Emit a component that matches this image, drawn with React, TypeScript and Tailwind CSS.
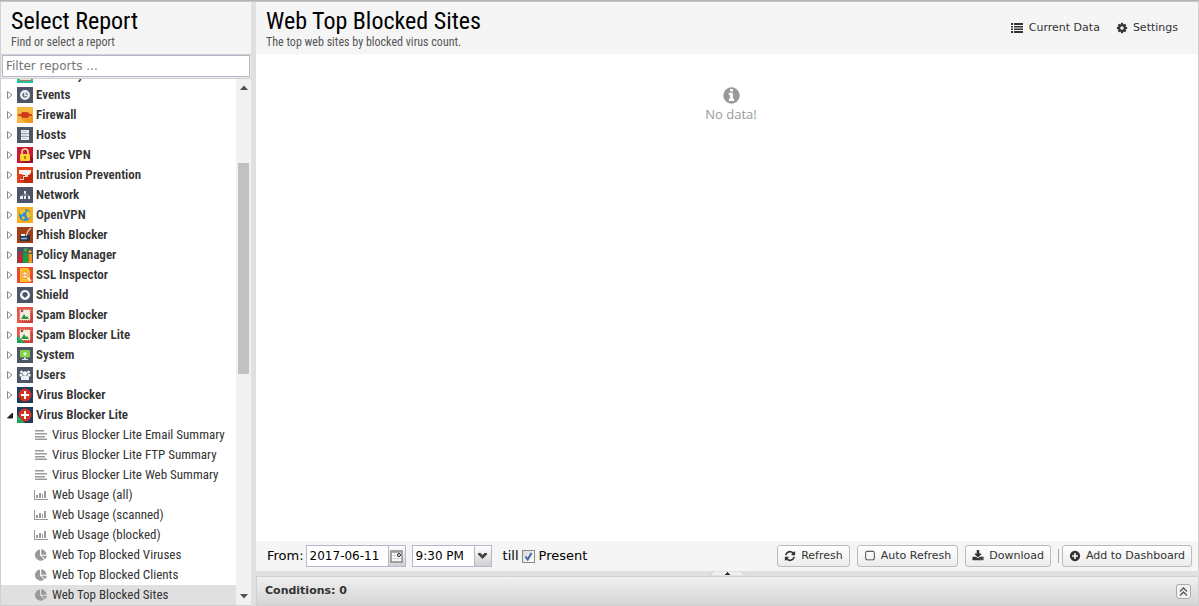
import React from 'react';

const CIRCLE =
  'm640 416q0 209-103 385.5t-279.5 279.5-385.5 103-385.5-103-279.5-279.5-103-385.5 103-385.5 279.5-279.5 385.5-103 385.5 103 279.5 279.5 103 385.5z';

const GLYPHS = {
  refresh:
    'M1639 1056q0 5-1 7-64 268-268 434.5t-478 166.5q-146 0-282.5-55t-243.5-157l-129 129q-19 19-45 19t-45-19-19-45v-448q0-26 19-45t45-19h448q26 0 45 19t19 45-19 45l-137 137q71 66 161 102t187 36q134 0 250-65t186-179q11-17 53-117 8-23 30-23h192q13 0 22.5 9.5t9.5 22.5zm25-800v448q0 26-19 45t-45 19h-448q-26 0-45-19t-19-45 19-45l138-138q-148-137-349-137-134 0-250 65t-186 179q-11 17-53 117-8 23-30 23h-199q-13 0-22.5-9.5t-9.5-22.5v-7q65-268 270-434.5t480-166.5q146 0 284 55.5t245 156.5l130-129q19-19 45-19t45 19 19 45z',
  cog: 'M1152 896q0-106-75-181t-181-75-181 75-75 181 75 181 181 75 181-75 75-181zm512-109v222q0 12-8 23t-20 13l-185 28q-19 54-39 91 35 50 107 138 10 12 10 25t-9 23q-27 37-99 108t-94 71q-12 0-26-9l-138-108q-44 23-91 38-16 136-29 186-7 28-36 28h-222q-14 0-24.5-8.5t-11.5-21.5l-28-184q-49-16-90-37l-141 107q-10 9-25 9-14 0-25-11-126-114-165-168-7-10-7-23 0-12 8-23 15-21 51-66.5t54-70.5q-27-50-41-99l-183-27q-13-2-21-12.5t-8-23.5v-222q0-12 8-23t19-13l186-28q14-46 39-92-40-57-107-138-10-12-10-24 0-10 9-23 26-36 98.5-107.5t94.5-71.5q13 0 26 10l138 107q44-23 91-38 16-136 29-186 7-28 36-28h222q14 0 24.5 8.5t11.5 21.5l28 184q49 16 90 37l142-107q9-9 24-9 13 0 25 10 129 119 165 170 7 8 7 22 0 12-8 23-15 21-51 66.5t-54 70.5q26 50 41 98l183 28q13 2 21 12.5t8 23.5z',
  download:
    'M1344 1344q0-26-19-45t-45-19-45 19-19 45 19 45 45 19 45-19 19-45zm256 0q0-26-19-45t-45-19-45 19-19 45 19 45 45 19 45-19 19-45zm128-224v320q0 40-28 68t-68 28h-1472q-40 0-68-28t-28-68v-320q0-40 28-68t68-28h465l135 136q58 56 136 56t136-56l136-136h464q40 0 68 28t28 68zm-325-569q17 41-14 70l-448 448q-18 19-45 19t-45-19l-448-448q-31-29-14-70 17-39 59-39h256v-448q0-26 19-45t45-19h256q26 0 45 19t19 45v448h256q42 0 59 39z',
  plus:
    'M1344 960v-128q0-26-19-45t-45-19h-256v-256q0-26-19-45t-45-19h-128q-26 0-45 19t-19 45v256h-256q-26 0-45 19t-19 45v128q0 26 19 45t45 19h256v256q0 26 19 45t45 19h128q26 0 45-19t19-45v-256h256q26 0 45-19t19-45zm320-64q0 209-103 385.5t-279.5 279.5-385.5 103-385.5-103-279.5-279.5-103-385.5 103-385.5 279.5-279.5 385.5-103 385.5 103 279.5 279.5 103 385.5z',
  info:
    'M1152 1376v-160q0-14-9-23t-23-9h-96v-512q0-14-9-23t-23-9h-320q-14 0-23 9t-9 23v160q0 14 9 23t23 9h96v320h-96q-14 0-23 9t-9 23v160q0 14 9 23t23 9h448q14 0 23-9t9-23zm-128-896v-160q0-14-9-23t-23-9h-192q-14 0-23 9t-9 23v160q0 14 9 23t23 9h192q14 0 23-9t9-23z' +
    CIRCLE,
  square:
    'M1312 256h-832q-66 0-113 47t-47 113v832q0 66 47 113t113 47h832q66 0 113-47t47-113v-832q0-66-47-113t-113-47zm288 160v832q0 119-84.500 203.500t-203.500 84.500h-832q-119 0-203.500-84.500t-84.500-203.500v-832q0-119 84.500-203.500t203.500-84.500h832q119 0 203.500 84.500t84.500 203.500z',
};

function Glyph({ name, className }: { name: keyof typeof GLYPHS; className: string }) {
  return (
    <svg viewBox="0 0 1792 1792" fill="currentColor" aria-hidden="true" className={className}>
      <path d={GLYPHS[name]} />
    </svg>
  );
}

const SLATE = '#4d5566';

const APP_ICONS: Record<string, React.ReactNode> = {
  directory: (
    <>
      <rect width="16" height="16" fill="#1fc29b" />
      <rect x="3" y="3" width="11" height="11" fill="#f3e3c8" />
      <rect x="3" y="13" width="11" height="1" fill="#b5745a" />
    </>
  ),
  events: (
    <>
      <rect width="16" height="16" fill={SLATE} />
      <circle cx="8" cy="8" r="3.900" fill="#6c7484" stroke="#eef0f4" strokeWidth="2.200" />
      <path d="M8 5v3.500h2.500" fill="none" stroke="#eef0f4" strokeWidth="1.500" />
    </>
  ),
  firewall: (
    <>
      <rect width="16" height="16" fill="#f5b841" />
      <path d="M4 11l5 5h7V9l-4-4z" fill="#ec9a20" />
      <path d="M1 7h3V6h1V5h6v1h1v1h3v2h-3v1h-1v1H5v-1H4V9H1z" fill="#d8431f" />
      <path d="M5 7h6M5 9h6" stroke="#b93218" strokeWidth="1" />
    </>
  ),
  hosts: (
    <>
      <rect width="16" height="16" fill={SLATE} />
      <path d="M4 3h8v3H4zM4 6.500h8v3H4zM4 10h8v3H4z" fill="#eceef1" />
      <path d="M5 4.500h5M5 8h5M5 11.500h5" stroke="#b9bec8" strokeWidth="0.800" />
    </>
  ),
  ipsec: (
    <>
      <rect width="16" height="16" fill="#c9193a" />
      <path d="M11 6l5 5v5H7l-3-3z" fill="#9d1230" />
      <path d="M5 8V5a3 3 0 0 1 6 0v3" fill="none" stroke="#f6e28a" strokeWidth="1.600" />
      <rect x="3" y="7" width="10" height="7" rx="1" fill="#fbd32c" />
      <path d="M7.300 9h1.400v3H7.300z" fill="#8a5b10" />
    </>
  ),
  intrusion: (
    <>
      <rect width="16" height="16" fill="#e2401b" />
      <path d="M6 8l8-3 2 2v9H8l-4-3z" fill="#c02b0c" />
      <path d="M2 3h12v3l-2 2H6L5 7H2z" fill="#f7efec" />
      <path d="M8 8h3v2H7v3H3v-1h3V9h2z" fill="#e7d4cf" />
    </>
  ),
  network: (
    <>
      <rect width="16" height="16" fill={SLATE} />
      <path d="M7 4h2v3H7zM3 9h3v3H3zM7 9h2v3H7zM11 9h2v3h-2z" fill="#eef0f4" />
      <path d="M8 6v3M4.500 9.500v-1.500h7v1.500" fill="none" stroke="#8c93a0" strokeWidth="1" />
    </>
  ),
  openvpn: (
    <>
      <rect width="16" height="16" fill="#fbae17" />
      <circle cx="8" cy="8" r="6" fill="#2b8fd0" />
      <path d="M3 4l4-2 2 1-1 2-2 1-1 2-2-1zM10 4l3 1 1 3-2 4-2-2-1-3zM5 9l3 1-1 3-2-2z" fill="#f4c52e" />
    </>
  ),
  phish: (
    <>
      <rect width="16" height="16" fill="#a3401a" />
      <path d="M3 8h10v6H3z" fill="#26364c" />
      <path d="M4 7h4v2H4z" fill="#e8eef4" />
      <path d="M9 9l2-5 3-3" fill="none" stroke="#e6d8c9" strokeWidth="1.200" />
      <path d="M4 11.500h6" stroke="#8fc0de" strokeWidth="1.500" />
    </>
  ),
  policy: (
    <>
      <rect width="16" height="16" fill={SLATE} />
      <circle cx="3" cy="6" r="1.600" fill="#d3202a" />
      <path d="M1 8h4v8H1z" fill="#d3202a" />
      <circle cx="8.500" cy="3" r="2" fill="#2fae4a" />
      <path d="M6 6h5v10H6z" fill="#1f9a3c" />
      <circle cx="13" cy="4.500" r="1.600" fill="#f2a51e" />
      <path d="M11.500 7h3.500v9h-3.500z" fill="#e8951a" />
    </>
  ),
  ssl: (
    <>
      <rect width="16" height="16" fill="#e94b35" />
      <path d="M3 1h8l2 3v11H3z" fill="#fbc02d" />
      <circle cx="8" cy="8" r="3.300" fill="#fff3cf" stroke="#f08a24" strokeWidth="1" />
      <path d="M6 8h4" stroke="#e8623a" strokeWidth="1.500" strokeDasharray="1.500 1" />
      <path d="M10.500 10.500l3.500 3.500" stroke="#fff" strokeWidth="1.500" />
    </>
  ),
  shield: (
    <>
      <rect width="16" height="16" fill={SLATE} />
      <circle cx="8" cy="8" r="5" fill="#f3f4f7" />
      <path d="M5.500 6L8 5l2.500 1v2.500L8 11 5.500 8.500z" fill="#4a5364" />
    </>
  ),
  spam: (
    <>
      <rect width="16" height="16" fill="#e5564b" />
      <path d="M13 4l3 3v9H7l-4-3z" fill="#c8443a" />
      <rect x="3" y="3" width="10" height="10" fill="#f6ece2" stroke="#f9d9d0" strokeWidth="1" strokeDasharray="1 1" />
      <path d="M4 12l3-5 2 3 1-1 2 3z" fill="#2f9a3d" />
      <circle cx="5" cy="4" r="1.300" fill="#8c5148" />
    </>
  ),
  system: (
    <>
      <rect width="16" height="16" fill={SLATE} />
      <rect x="3" y="3" width="10" height="7.500" rx="1" fill="#7ed348" />
      <circle cx="8" cy="7" r="1.700" fill="#e4f8d4" />
      <path d="M7 10.500h2v1.500h2v1H5v-1h2z" fill="#dfe3e8" />
    </>
  ),
  users: (
    <>
      <rect width="16" height="16" fill={SLATE} />
      <circle cx="4.500" cy="5" r="1.500" fill="#eef0f4" />
      <circle cx="11.500" cy="5" r="1.500" fill="#eef0f4" />
      <circle cx="8" cy="6.500" r="2.200" fill="#fff" />
      <path d="M2.500 7h3v2.500h-3zM10.500 7h3v2.500h-3zM4 13v-2.500Q4.500 8.500 8 8.500t4 2V13z" fill="#eef0f4" />
    </>
  ),
  virus: (
    <>
      <rect width="16" height="16" fill="#1f3a5c" />
      <circle cx="8" cy="8" r="6.500" fill="#d32f22" />
      <path d="M7 4h2v3h3v2H9v3H7V9H4V7h3z" fill="#fff" />
    </>
  ),
};

function AppIcon({ name, lite }: { name: string; lite?: boolean }) {
  return (
    <svg viewBox="0 0 16 16" aria-hidden="true" className="size-4 shrink-0">
      {APP_ICONS[name]}
      {lite && (
        <>
          <path d="M0 8l8 8H0z" fill="#1e9e5a" />
          <path d="M1 11l4 4" stroke="#8fd9b0" strokeWidth="1" strokeDasharray="1 1" />
        </>
      )}
    </svg>
  );
}

type Kind = 'text' | 'bars' | 'pie';

function ReportIcon({ kind }: { kind: Kind }) {
  return (
    <svg viewBox="0 0 14 14" fill="currentColor" aria-hidden="true" className="size-3.5 shrink-0 text-[#999999]">
      {kind === 'text' && <path d="M1 2h9v1.500H1zM1 5h12v1.500H1zM1 8h10v1.500H1zM1 10.500h12v1.500H1z" />}
      {kind === 'bars' && <path d="M0 2h1v9h13v1H0zM2 7h2v3H2zM5 5h2v5H5zM8 6h1v4H8zM10 3h2v7h-2z" />}
      {kind === 'pie' && (
        <path d="M6 1.500V7.300l4.100 4.100A5.600 5.600 0 1 1 6 1.500zM7.600 7.700h5.200a5.600 5.600 0 0 1-1.700 3.500zM7.200 1.300a5.500 5.500 0 0 1 5.300 5.400H7.200z" />
      )}
    </svg>
  );
}

const categories = [
  { label: 'Directory Connector', icon: 'directory' },
  { label: 'Events', icon: 'events' },
  { label: 'Firewall', icon: 'firewall' },
  { label: 'Hosts', icon: 'hosts' },
  { label: 'IPsec VPN', icon: 'ipsec' },
  { label: 'Intrusion Prevention', icon: 'intrusion' },
  { label: 'Network', icon: 'network' },
  { label: 'OpenVPN', icon: 'openvpn' },
  { label: 'Phish Blocker', icon: 'phish' },
  { label: 'Policy Manager', icon: 'policy' },
  { label: 'SSL Inspector', icon: 'ssl' },
  { label: 'Shield', icon: 'shield' },
  { label: 'Spam Blocker', icon: 'spam' },
  { label: 'Spam Blocker Lite', icon: 'spam', lite: true },
  { label: 'System', icon: 'system' },
  { label: 'Users', icon: 'users' },
  { label: 'Virus Blocker', icon: 'virus' },
  { label: 'Virus Blocker Lite', icon: 'virus', lite: true, open: true },
];

const reports: { label: string; kind: Kind; selected?: boolean }[] = [
  { label: 'Virus Blocker Lite Email Summary', kind: 'text' },
  { label: 'Virus Blocker Lite FTP Summary', kind: 'text' },
  { label: 'Virus Blocker Lite Web Summary', kind: 'text' },
  { label: 'Web Usage (all)', kind: 'bars' },
  { label: 'Web Usage (scanned)', kind: 'bars' },
  { label: 'Web Usage (blocked)', kind: 'bars' },
  { label: 'Web Top Blocked Viruses', kind: 'pie' },
  { label: 'Web Top Blocked Clients', kind: 'pie' },
  { label: 'Web Top Blocked Sites', kind: 'pie', selected: true },
];

function Expander({ open }: { open?: boolean }) {
  return (
    <svg viewBox="0 0 16 16" aria-hidden="true" className="size-4 shrink-0">
      {open ? (
        <path d="M11.500 6v5h-5z" fill="#222222" stroke="#222222" />
      ) : (
        <path d="M6.500 4.500v7l4.500-3.500z" fill="#ffffff" stroke="#888888" />
      )}
    </svg>
  );
}

function PanelHeader({ title, subtitle }: { title: string; subtitle: string }) {
  return (
    <div className="px-2.5 pt-1 font-['Roboto_Condensed','Liberation_Sans_Narrow',sans-serif]">
      <h1 className="text-2xl leading-[30px] text-black">{title}</h1>
      <p className="text-xs leading-3 text-[#555555]">{subtitle}</p>
    </div>
  );
}

function Sidebar() {
  return (
    <aside className="flex w-[251px] shrink-0 flex-col border-b border-l border-[#d0d0d0] bg-white">
      <header className="h-[52px] shrink-0 bg-[#f5f5f5]">
        <PanelHeader title="Select Report" subtitle="Find or select a report" />
      </header>
      <div className="border-y border-[#d0d0d0] bg-[#ececec] px-px pb-px">
        <input
          type="text"
          aria-label="Filter reports"
          placeholder="Filter reports ..."
          className="block h-[22px] w-full border border-[#b5b8c8] bg-white px-[3px] text-[12px] text-black placeholder:text-[#757575] focus:outline-none"
        />
      </div>
      <div className="flex min-h-0 flex-1">
        <div className="min-w-0 flex-1 overflow-hidden font-['Roboto_Condensed','Liberation_Sans_Narrow',sans-serif] text-[13px] leading-5 text-[#333333]">
          <ul className="-mt-3.5">
            {categories.map((c) => (
              <li key={c.label}>
                <button type="button" aria-expanded={!!c.open} className="flex h-5 w-full items-center text-left font-semibold">
                  <Expander open={c.open} />
                  <AppIcon name={c.icon} lite={c.lite} />
                  <span className="pl-[3px]">{c.label}</span>
                </button>
              </li>
            ))}
            {reports.map((r) => (
              <li key={r.label} className={r.selected ? 'bg-[#e0e0e0]' : ''}>
                <a href="#report" className="flex h-5 items-center gap-1 pl-[33px]">
                  <ReportIcon kind={r.kind} />
                  <span className="whitespace-nowrap">{r.label}</span>
                </a>
              </li>
            ))}
          </ul>
        </div>
        <div className="flex w-[15px] shrink-0 flex-col items-center justify-between bg-[#f1f1f1] px-[2px] py-1.5">
          <svg viewBox="0 0 8 5" aria-hidden="true" className="h-[5px] w-2">
            <path d="M0 5l4-4.500L8 5z" fill="#505050" />
          </svg>
          <div className="flex w-full flex-1 flex-col">
            <div className="grow-[73]" />
            <div className="grow-[210] bg-[#c1c1c1]" />
            <div className="grow-[220]" />
          </div>
          <svg viewBox="0 0 8 5" aria-hidden="true" className="h-[5px] w-2">
            <path d="M0 0l4 4.500L8 0z" fill="#505050" />
          </svg>
        </div>
      </div>
    </aside>
  );
}

function ToolButton({ children }: { children: React.ReactNode }) {
  return (
    <button
      type="button"
      className="flex h-[22px] items-center gap-[5px] rounded-[3px] border border-[#bbbbbb] bg-linear-to-b from-white to-[#ececec] px-1.5 text-[11px] whitespace-nowrap text-[#333333]"
    >
      {children}
    </button>
  );
}

function RangeBar() {
  return (
    <div className="flex h-[30px] shrink-0 items-center bg-[#f5f5f5] pr-1.5 pl-[11px] text-[13px] text-black">
      <label htmlFor="from" className="mr-0.5">
        From:
      </label>
      <div className="flex h-[22px] w-[100px] border border-[#b5b8c8] bg-white text-xs">
        <input id="from" type="text" defaultValue="2017-06-11" className="w-0 flex-1 pl-[3px] focus:outline-none" />
        <button
          type="button"
          aria-label="Pick a date"
          className="flex w-[17px] items-center justify-center border-l border-[#b5b8c8] bg-linear-to-b from-white to-[#d0d0d0]"
        >
          <svg viewBox="0 0 13 13" aria-hidden="true" className="size-[13px]">
            <rect x="1" y="1" width="11" height="11" fill="#fff" stroke="#888" strokeWidth="1.500" />
            <path d="M4.500 3v8M7.500 3v8M2 5.500h9M2 8.500h9" stroke="#ddd" />
            <path d="M1 2h11" stroke="#999" strokeWidth="1.500" />
            <circle cx="9" cy="5" r="1.500" fill="#fff" stroke="#222" />
          </svg>
        </button>
      </div>
      <div className="ml-1.5 flex h-[22px] w-20 border border-[#b5b8c8] bg-white text-xs">
        <input aria-label="Time" type="text" defaultValue="9:30 PM" className="w-0 flex-1 pl-[3px] focus:outline-none" />
        <button
          type="button"
          aria-label="Choose a time"
          className="flex w-[17px] items-center justify-center border-l border-[#b5b8c8] bg-linear-to-b from-white to-[#d0d0d0]"
        >
          <svg viewBox="0 0 9 6" aria-hidden="true" className="h-1.5 w-[9px]">
            <path d="M0 0h2.500l2 2 2-2H9v1.500L4.500 6 0 1.500z" fill="#444" />
          </svg>
        </button>
      </div>
      <label className="ml-[11px] flex items-center">
        till
        <input type="checkbox" defaultChecked className="peer sr-only" />
        <span className="mr-1 ml-[3px] flex size-[13px] items-center justify-center border border-[#8a8a8a] bg-linear-to-br from-[#d8d8d8] to-white">
          <svg viewBox="0 0 9 9" aria-hidden="true" className="size-[9px]">
            <path d="M1.500 4.500L3.700 7.500 7.500 1" fill="none" stroke="#4466a8" strokeWidth="2" />
          </svg>
        </span>
        Present
      </label>
      <div className="ml-auto flex items-center gap-[7px]">
        <ToolButton>
          <Glyph name="refresh" className="size-3" />
          Refresh
        </ToolButton>
        <ToolButton>
          <Glyph name="square" className="size-3" />
          Auto Refresh
        </ToolButton>
        <ToolButton>
          <Glyph name="download" className="size-3" />
          Download
        </ToolButton>
        <div className="flex items-center gap-[3px]">
          <div className="h-3.5 w-px bg-[#aca899]" />
          <ToolButton>
            <Glyph name="plus" className="size-3" />
            Add to Dashboard
          </ToolButton>
        </div>
      </div>
    </div>
  );
}

function Main() {
  return (
    <main className="flex min-w-0 flex-1 flex-col">
      <section className="flex min-h-0 flex-1 flex-col border-r border-[#d0d0d0] bg-white">
        <header className="flex h-[52px] shrink-0 items-center justify-between bg-[#f5f5f5] pr-5">
          <div className="self-start">
            <PanelHeader title="Web Top Blocked Sites" subtitle="The top web sites by blocked virus count." />
          </div>
          <div className="flex gap-4 text-[11px] text-[#333333]">
            <button type="button" className="flex items-center gap-1.5">
              <svg viewBox="0 0 12 12" fill="currentColor" aria-hidden="true" className="size-3">
                <path d="M0 1h2v2H0zM3 1h9v2H3zM0 4h2v1.500H0zM3 4h9v1.500H3zM0 6.500h2V8H0zM3 6.500h9V8H3zM0 9h2v2H0zM3 9h9v2H3z" />
              </svg>
              Current Data
            </button>
            <button type="button" className="flex items-center gap-[5px]">
              <Glyph name="cog" className="size-3" />
              Settings
            </button>
          </div>
        </header>
        <div className="flex flex-1 flex-col items-center pt-8 pl-2 font-['Open_Sans','Noto_Sans',sans-serif] text-[#999999]">
          <Glyph name="info" className="size-[19px]" />
          <p className="text-[13px] leading-[18px]">No data!</p>
        </div>
        <RangeBar />
      </section>
      <div className="flex h-[5px] shrink-0 justify-center bg-[#e0e0e0]">
        <button type="button" aria-label="Expand conditions" className="h-[5px] w-[35px]">
          <svg viewBox="0 0 35 5" aria-hidden="true" className="h-[5px] w-[35px]">
            <path d="M0 5L4 0h27l4 5z" fill="#f0f0f0" stroke="#cccccc" strokeWidth="0.800" />
            <path d="M17 1h1v1h1v1h1v1h-5V3h1V2h1z" fill="#333333" />
          </svg>
        </button>
      </div>
      <section className="flex h-[30px] shrink-0 items-center justify-between border border-[#d0d0d0] bg-linear-to-b from-[#f0f0f0] to-[#d5d5d5] pr-[7px] pl-2">
        <h2 className="text-[11px] font-bold text-[#333333]">Conditions: 0</h2>
        <button
          type="button"
          aria-label="Show conditions"
          className="flex size-[15px] items-center justify-center rounded-[3px] border border-[#aaaaaa] bg-[#f3f3f3]"
        >
          <svg viewBox="0 0 9 9" aria-hidden="true" className="size-[9px]">
            <path d="M1 4.500L4.500 1 8 4.500M1 8.500L4.500 5 8 8.500" fill="none" stroke="#555" strokeWidth="1.300" />
          </svg>
        </button>
      </section>
    </main>
  );
}

export default function App() {
  return (
    <div className="flex h-screen flex-col overflow-hidden bg-[#e0e0e0] font-['DejaVu_Sans',sans-serif]">
      <div className="h-0.5 shrink-0 bg-linear-to-b from-[#a8a8a8] to-[#d0d0d0]" />
      <div className="flex min-h-0 flex-1 gap-[5px]">
        <Sidebar />
        <Main />
      </div>
    </div>
  );
}
